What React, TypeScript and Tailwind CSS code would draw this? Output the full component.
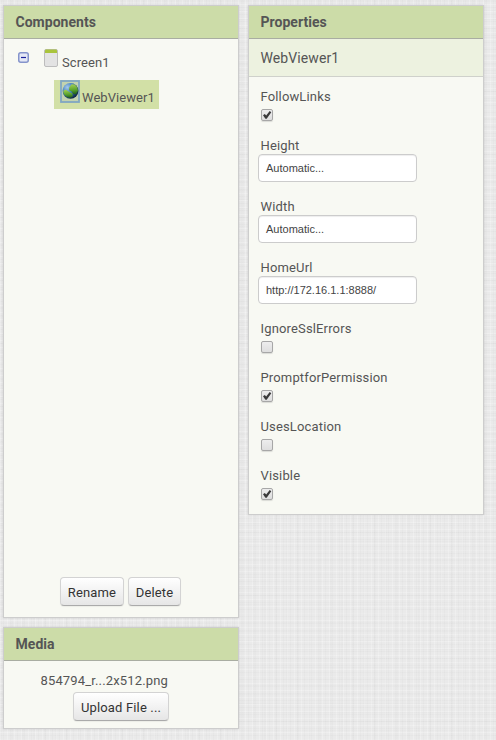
import React from "react";

const linen =
  "bg-[#eaeaea] bg-[repeating-linear-gradient(90deg,rgba(255,255,255,0.22)_0_1px,transparent_1px_3px,rgba(0,0,0,0.015)_3px_4px,transparent_4px_7px),repeating-linear-gradient(0deg,rgba(255,255,255,0.22)_0_1px,transparent_1px_4px,rgba(0,0,0,0.015)_4px_5px,transparent_5px_7px),repeating-linear-gradient(90deg,rgba(0,0,0,0.012)_0_2px,transparent_2px_11px),repeating-linear-gradient(0deg,rgba(0,0,0,0.012)_0_1px,transparent_1px_9px)]";

function Panel({ title, className, children }: { title: string; className: string; children: React.ReactNode }) {
  return (
    <section className={`flex w-[236px] flex-col border border-[#cdcdcd] bg-[#f8f9f3] shadow-[0_0_2px_rgba(0,0,0,0.12)] ${className}`}>
      <h2 className="h-[33px] shrink-0 border-b border-[#a9ada2] bg-[#ccdca8] pl-[11.5px] text-[14px] font-bold leading-[32px] tracking-[0.03px]">
        {title}
      </h2>
      {children}
    </section>
  );
}

function Button({ children, className }: { children: React.ReactNode; className: string }) {
  return (
    <button className={`h-[29px] rounded-[4px] border border-[#d3d3d3] border-b-[#aaa] bg-linear-to-b from-white to-[#e6e6e6] pt-[2px] text-center text-[13px] leading-[25px] tracking-[0.15px] whitespace-nowrap text-[#333] shadow-[0_1px_1px_rgba(0,0,0,0.05)] ${className}`}>
      {children}
    </button>
  );
}

function Check({ on }: { on: boolean }) {
  return (
    <span className="mt-1 ml-[3px] block h-3 w-3 rounded-[2px] border border-[#a7a7a7] bg-linear-to-b from-[#ededed] to-[#dedede] shadow-[0_1px_1px_rgba(0,0,0,0.12)]">
      {on && (
        <svg viewBox="0 0 10 10" className="block h-[10px] w-[10px]">
          <path d="M1 5.2 2.8 4 4.2 5.4 7.7 1 9.3 2.2 4.7 8.8 3.4 8.8Z" fill="#3a3a3a" />
        </svg>
      )}
    </span>
  );
}

function Property({ name, value }: { name: string; value: string | boolean }) {
  return (
    <div className="pb-4">
      <div className="h-[17px] pl-[2.5px] text-[13px] leading-[17px] tracking-[0.15px]">{name}</div>
      {typeof value === "boolean" ? (
        <Check on={value} />
      ) : (
        <div className="h-7 w-[159px] rounded-[4px] border border-[#ccc] bg-white pl-[7px] font-['Liberation_Sans',sans-serif] text-[11px] leading-[26px] text-[#444] shadow-[inset_0_1px_1px_rgba(0,0,0,0.07)]">
          {value}
        </div>
      )}
    </div>
  );
}

const properties: [string, string | boolean][] = [
  ["FollowLinks", true],
  ["Height", "Automatic..."],
  ["Width", "Automatic..."],
  ["HomeUrl", "http://172.16.1.1:8888/"],
  ["IgnoreSslErrors", false],
  ["PromptforPermission", true],
  ["UsesLocation", false],
  ["Visible", true],
];

function Collapse() {
  return (
    <svg viewBox="0 0 11 11" className="mt-[13px] ml-[14px] h-[11px] w-[11px] shrink-0">
      <rect x=".75" y=".75" width="9.5" height="9.5" rx="2" fill="#e4e8f5" stroke="#8594cb" strokeWidth="1.5" />
      <path d="M3 5.5h5" stroke="#1a229c" strokeWidth="1.2" />
    </svg>
  );
}

function ScreenIcon() {
  return (
    <svg viewBox="0 0 14 18" className="mt-[10px] ml-[15px] h-[18px] w-[14px] shrink-0">
      <rect x=".5" y=".5" width="13" height="17" rx="1.5" fill="#e3e3e3" stroke="#bdbdbd" />
      <path d="M1 4V1.8Q1 .5 2 .5h10q1 0 1 1.3V4Z" fill="#a9c43c" />
    </svg>
  );
}

function GlobeIcon() {
  return (
    <svg viewBox="0 0 20 23" className="ml-[6px] h-[23px] w-5 shrink-0">
      <defs>
        <radialGradient id="globe" cx=".3" cy=".28" r=".8">
          <stop offset="0" stopColor="#a5caec" />
          <stop offset=".5" stopColor="#3a78bb" />
          <stop offset="1" stopColor="#0b1f3c" />
        </radialGradient>
        <linearGradient id="land" x1=".4" y1="0" x2=".5" y2="1">
          <stop offset="0" stopColor="#a5d052" />
          <stop offset=".6" stopColor="#55a02c" />
          <stop offset="1" stopColor="#1f5a1c" />
        </linearGradient>
      </defs>
      <rect x="1" y="1" width="18" height="21" fill="#c3d3af" stroke="#81a7c3" strokeWidth="1.8" />
      <ellipse cx="10.5" cy="10.8" rx="7.9" ry="7.9" fill="url(#globe)" />
      <path d="M9.2 7.4 11.6 4.2 14.8 4.4 17.3 7.2 18 10.8 16 14.4 13.2 14 11.6 11.4 9 10.2Z" fill="url(#land)" />
      <path d="M3.2 11 5.4 9.6 8.8 11.6 12.4 13.4 12.8 16.2 10 18 6.4 16.8 3.8 14Z" fill="url(#land)" />
    </svg>
  );
}

export default function App() {
  return (
    <main className={`flex h-[740px] w-[496px] items-start gap-[9px] overflow-hidden pt-[5px] pl-[3px] font-[Roboto,sans-serif] text-[#555] ${linen}`}>
      <div className="flex flex-col gap-[9px]">
        <Panel title="Components" className="h-[613px]">
          <div className="flex flex-1 flex-col items-start">
            <div className="flex h-[41px] items-start">
              <Collapse />
              <ScreenIcon />
              <span className="mt-[15px] ml-1 text-[13px] leading-[17px] tracking-[0.1px]">Screen1</span>
            </div>
            <div className="ml-[50px] flex h-[29px] w-[105px] items-start bg-[#d2e0a6]">
              <GlobeIcon />
              <span className="mt-[9px] ml-[2px] text-[13px] leading-[17px] tracking-[0.05px]">WebViewer1</span>
            </div>
          </div>
          <div className="flex gap-1 pb-[11px] pl-14">
            <Button className="w-16">Rename</Button>
            <Button className="w-[53px]">Delete</Button>
          </div>
        </Panel>
        <Panel title="Media" className="h-[102px]">
          <div className="mt-[11px] h-5 pl-[36.5px] text-[13px] leading-[17px] tracking-[0.15px]">854794_r...2x512.png</div>
          <Button className="ml-[69px] w-24">Upload File ...</Button>
        </Panel>
      </div>
      <Panel title="Properties" className="h-[510px]">
        <div className="h-[38px] shrink-0 border-b border-[#cfd1cb] bg-[#edf2e0] pl-[11.5px] pt-px text-[14px] leading-[36px] tracking-[0.1px]">
          WebViewer1
        </div>
        <div className="pt-[11px] pl-[9px]">
          {properties.map(([name, value]) => (
            <Property key={name} name={name} value={value} />
          ))}
        </div>
      </Panel>
    </main>
  );
}
